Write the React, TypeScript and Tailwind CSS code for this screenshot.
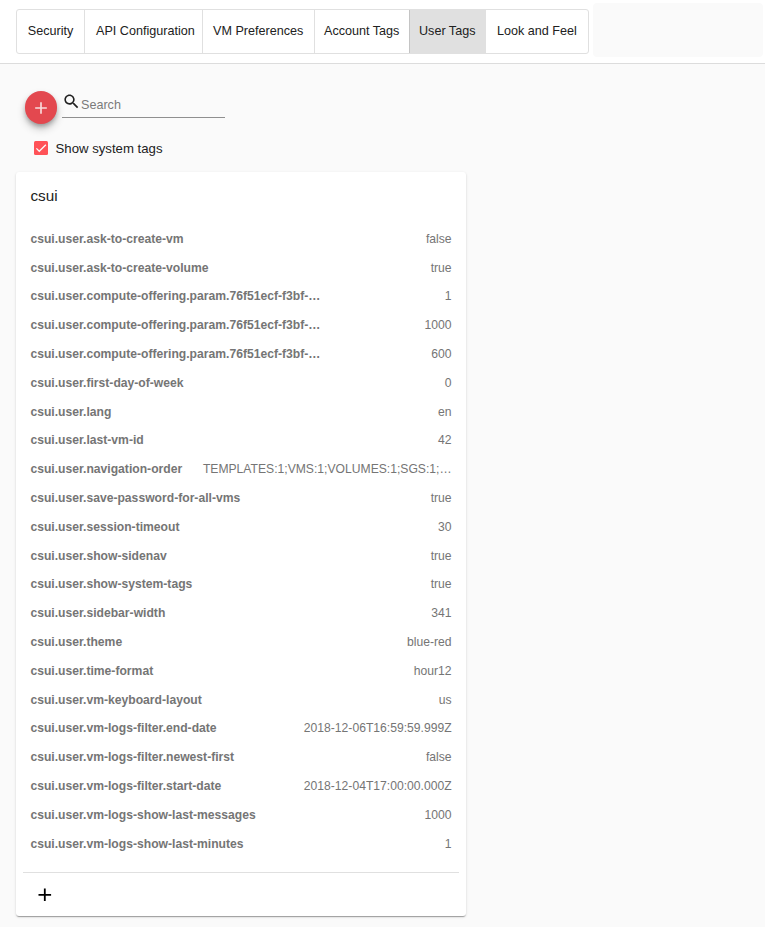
const tabs = [
  { label: 'Security', box: 'w-[67px] pl-[10.8px]' },
  { label: 'API Configuration', box: 'w-[118px] pl-[11px] border-l border-[#e0e0e0]' },
  { label: 'VM Preferences', box: 'w-[112px] pl-[10px] border-l border-[#e0e0e0]' },
  { label: 'Account Tags', box: 'w-[95px] pl-[9px] border-l border-[#e0e0e0]' },
  { label: 'User Tags', box: 'w-[76px] pl-[9px] border-l border-[#c4c4c4] bg-[#e0e0e0]' },
  { label: 'Look and Feel', box: 'w-[103px] pl-[11px] border-l border-[#e0e0e0]' },
];

const tags: [string, string][] = [
  ['csui.user.ask-to-create-vm', 'false'],
  ['csui.user.ask-to-create-volume', 'true'],
  ['csui.user.compute-offering.param.76f51ecf-f3bf-…', '1'],
  ['csui.user.compute-offering.param.76f51ecf-f3bf-…', '1000'],
  ['csui.user.compute-offering.param.76f51ecf-f3bf-…', '600'],
  ['csui.user.first-day-of-week', '0'],
  ['csui.user.lang', 'en'],
  ['csui.user.last-vm-id', '42'],
  ['csui.user.navigation-order', 'TEMPLATES:1;VMS:1;VOLUMES:1;SGS:1;…'],
  ['csui.user.save-password-for-all-vms', 'true'],
  ['csui.user.session-timeout', '30'],
  ['csui.user.show-sidenav', 'true'],
  ['csui.user.show-system-tags', 'true'],
  ['csui.user.sidebar-width', '341'],
  ['csui.user.theme', 'blue-red'],
  ['csui.user.time-format', 'hour12'],
  ['csui.user.vm-keyboard-layout', 'us'],
  ['csui.user.vm-logs-filter.end-date', '2018-12-06T16:59:59.999Z'],
  ['csui.user.vm-logs-filter.newest-first', 'false'],
  ['csui.user.vm-logs-filter.start-date', '2018-12-04T17:00:00.000Z'],
  ['csui.user.vm-logs-show-last-messages', '1000'],
  ['csui.user.vm-logs-show-last-minutes', '1'],
];

function PlusIcon({ className }: { className: string }) {
  return (
    <svg viewBox="0 0 24 24" fill="currentColor" className={className}>
      <path d="M19 13h-6v6h-2v-6H5v-2h6V5h2v6h6v2z" />
    </svg>
  );
}

function TabBar() {
  return (
    <header className="flex h-16 border-b border-[#dcdcdc] bg-white pl-4">
      <nav className="mt-[9px] flex h-[45px] w-[573px] shrink-0 overflow-hidden rounded-[3px] border border-[#e0e0e0]">
        {tabs.map((tab) => (
          <button
            key={tab.label}
            className={`flex shrink-0 items-center whitespace-nowrap text-[12.6px] text-[#212121] ${tab.box}`}
          >
            {tab.label}
          </button>
        ))}
      </nav>
      <div className="ml-1 mt-[3px] h-[54px] w-[170px] shrink-0 rounded bg-[#fafafa]" />
    </header>
  );
}

function Toolbar() {
  return (
    <div className="flex pl-[25px] pt-[27px]">
      <button className="flex h-[33px] w-8 items-center justify-center rounded-full bg-[#e3484f] text-[#f8dadb] shadow-[0_3px_5px_-1px_rgba(0,0,0,0.3),0_5px_9px_rgba(0,0,0,0.2)]">
        <PlusIcon className="size-5" />
      </button>
      <label className="ml-[5px] flex h-[27px] w-[163px] border-b border-[#8f8f8f]">
        <svg viewBox="0 0 24 24" className="mt-[1px] size-[19px] shrink-0 text-[#212121]" fill="currentColor">
          <path d="M15.5 14h-.79l-.28-.27C15.41 12.59 16 11.11 16 9.5 16 5.91 13.09 3 9.5 3S3 5.91 3 9.5 5.91 16 9.5 16c1.61 0 3.09-.59 4.23-1.57l.27.28v.79l5 4.99L20.49 19l-4.99-5zm-6 0C7.01 14 5 11.99 5 9.5S7.01 5 9.5 5 14 7.01 14 9.5 11.99 14 9.5 14z" />
        </svg>
        <input
          placeholder="Search"
          className="mt-[6px] h-4 w-36 bg-transparent p-0 text-[12.6px] outline-none placeholder:text-[#7b7b7b]"
        />
      </label>
    </div>
  );
}

export default function App() {
  return (
    <div className="h-[927px] w-[765px] overflow-hidden bg-[#fafafa] font-['Liberation_Sans',Arial,sans-serif] text-[#212121]">
      <TabBar />
      <Toolbar />
      <label className="ml-[34px] mt-[17px] flex h-[14px] items-center">
        <span className="flex size-[14px] items-center justify-center rounded-[1.5px] bg-[#ff5257]">
          <svg viewBox="0 0 24 24" className="size-[14px]" fill="none" stroke="#fafafa" strokeWidth="2.2">
            <path d="M4.1 12.7 9 17.6 20.3 6.3" />
          </svg>
        </span>
        <span className="ml-[7.5px] pt-[2px] text-[13.2px] leading-[14px]">Show system tags</span>
      </label>
      <section className="ml-4 mt-[17px] h-[744px] w-[450px] rounded-[3px] bg-white pt-[14px] shadow-[0_2px_1px_-1px_rgba(0,0,0,0.2),0_1px_1px_rgba(0,0,0,0.14),0_1px_3px_rgba(0,0,0,0.12)]">
        <h2 className="pl-[14.4px] text-[15.3px] leading-5">csui</h2>
        <div className="mt-[18.4px] h-[647.6px] px-[14.4px]">
          {tags.map(([name, value], index) => (
            <div
              key={index}
              className="flex h-[28.8px] items-center justify-between whitespace-nowrap text-[12.15px] leading-[18px] text-[#757575]"
            >
              <strong className="font-bold">{name}</strong>
              <span>{value}</span>
            </div>
          ))}
        </div>
        <div className="mx-[7px] h-11 border-t border-[#e0e0e0] pl-[11px] pt-[11px]">
          <PlusIcon className="size-[21.6px] text-black" />
        </div>
      </section>
    </div>
  );
}
